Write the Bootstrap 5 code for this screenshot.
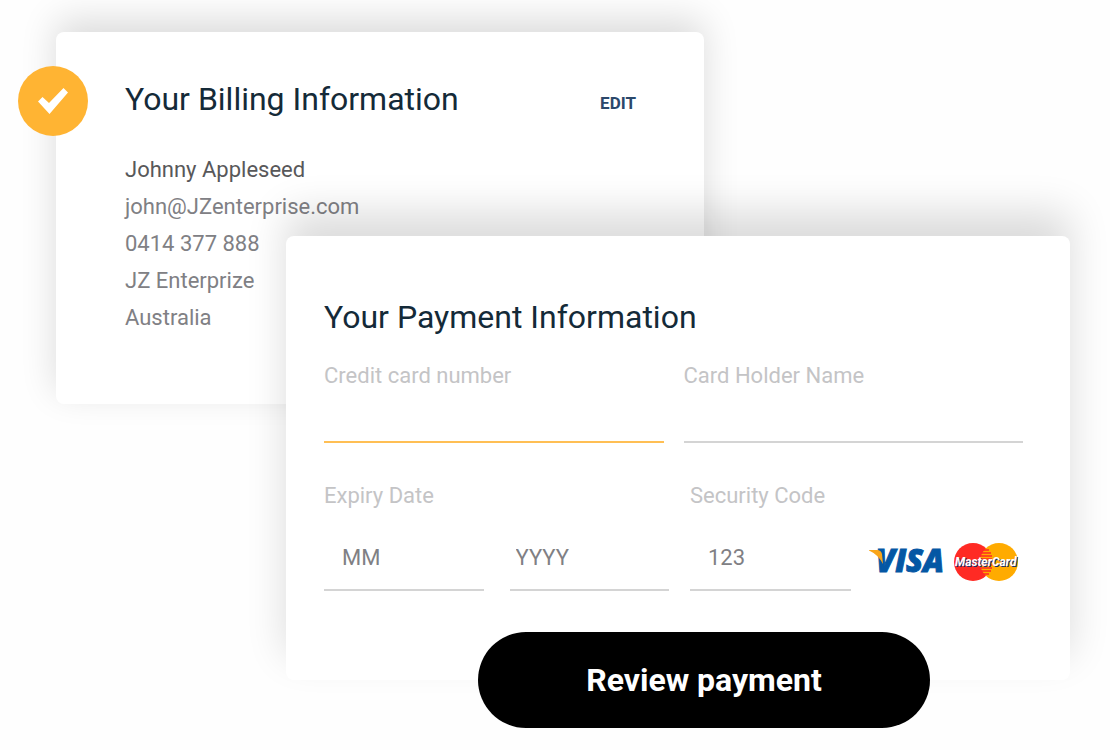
<!DOCTYPE html>
<html lang="en">
<head>
<meta charset="utf-8">
<meta name="viewport" content="width=device-width, initial-scale=1">
<title>Checkout</title>
<link href="https://cdn.jsdelivr.net/npm/bootstrap@5.3.0/dist/css/bootstrap.min.css" rel="stylesheet">
<style>
  body { font-family: Roboto, "Liberation Sans", sans-serif; font-size: 22px; background: #fefefe; color: #808084; }
  .checkout { display: grid; grid-template-columns: 230fr 418fr 366fr; grid-template-rows: 204px 168px auto; padding: 32px 40px 70px 56px; }
  .panel { border: 0; border-radius: 8px; background: #fff; }
  .billing { grid-area: 1 / 1 / 3 / 3; padding: 44px 68px 40px 69px; box-shadow: 0 -12px 36px rgba(0,0,0,.14); }
  .payment { grid-area: 2 / 2 / 4 / 4; padding: 58px 47px 0 38px; box-shadow: 0 -24px 40px rgba(0,0,0,.14); }
  .panel-title { font-size: 32px; line-height: 46px; font-weight: 400; color: #142a38; }
  .step-done { position: absolute; left: -38px; top: 34px; width: 70px; height: 70px; border-radius: 50%; background: #ffb433; }
  .edit-link { font-size: 17px; line-height: 20px; font-weight: 700; color: #2b486b; }
  .details { line-height: 37px; margin-top: 29px; }
  .details .person { color: #58585a; }
  .field-label { line-height: 28px; color: #c4c4c6; display: block; margin: 0; }
  .line-input { border: 0; border-bottom: 2px solid #d4d4d4; border-radius: 0; background: transparent; padding: 0 6px 13px; height: 53px; font-size: 22px; color: #808084; }
  .line-input:focus { box-shadow: none; background: transparent; border-color: #ffb433; }
  .line-input::placeholder { color: #808084; opacity: 1; }
  .line-input.current { border-color: #ffbf54; }
  .padded { padding-left: 18px; }
  .pair { display: grid; grid-template-columns: 1fr 1fr; column-gap: 20px; margin-top: 22px; }
  .triple { display: grid; grid-template-columns: 345fr 161fr 151px; column-gap: 21px; margin-top: 39px; }
  .expiry { display: grid; grid-template-columns: 1fr 1fr; column-gap: 26px; }
  .short { margin-top: 28px; }
  .review-btn { width: 452px; max-width: 100%; height: 96px; margin: 41px 0 -48px 154px; border: 0; border-radius: 48px; background: #000; color: #fff; font-size: 32px; font-weight: 700; }
  .review-btn:hover { background: #222; color: #fff; }
  .card-brands { flex: none; }
  .visa-word { font: italic 800 31px "Open Sans", sans-serif; fill: #0457a4; stroke: #0457a4; stroke-width: 1; }
  .mc-word { font: italic 700 12px Roboto, sans-serif; }
</style>
</head>
<body>
<main class="checkout">
  <section class="card panel billing">
    <span class="step-done d-flex align-items-center justify-content-center">
      <svg width="70" height="70" viewBox="0 0 70 70" role="img" aria-label="Completed"><path d="M20 35.500 24.500 31 31 37 45.500 22 50 26.500 31.500 48Z" fill="#fff"/></svg>
    </span>
    <div class="d-flex justify-content-between align-items-center">
      <h2 class="panel-title m-0">Your Billing Information</h2>
      <a href="#" class="edit-link text-decoration-none mt-2">EDIT</a>
    </div>
    <ul class="details list-unstyled mb-0">
      <li class="person">Johnny Appleseed</li>
      <li>john@JZenterprise.com</li>
      <li>0414 377 888</li>
      <li>JZ Enterprize</li>
      <li>Australia</li>
    </ul>
  </section>

  <section class="card panel payment">
    <form>
      <h2 class="panel-title m-0">Your Payment Information</h2>
      <div class="pair">
        <div>
          <label class="field-label" for="number">Credit card number</label>
          <input class="form-control line-input current" id="number" type="text">
        </div>
        <div>
          <label class="field-label" for="holder">Card Holder Name</label>
          <input class="form-control line-input" id="holder" type="text">
        </div>
      </div>
      <div class="triple">
        <div>
          <label class="field-label" for="month">Expiry Date</label>
          <div class="expiry short">
            <input class="form-control line-input padded" id="month" type="text" placeholder="MM">
            <input class="form-control line-input" type="text" placeholder="YYYY" aria-label="Expiry year">
          </div>
        </div>
        <div>
          <label class="field-label" for="code">Security Code</label>
          <input class="form-control line-input padded short" id="code" type="text" placeholder="123">
        </div>
        <div class="d-flex align-items-end justify-content-end pb-2">
          <svg class="card-brands" width="154" height="44" viewBox="0 0 154 44" role="img" aria-label="Visa and MasterCard">
            <text class="visa-word" x="7" y="33">VISA</text>
            <path d="M-1 11H8Q12 11 13 15L14 25Q9 15 -1 11Z" fill="#f9a51a"/>
            <circle cx="104" cy="23" r="19" fill="#ff2a24"/>
            <circle cx="130" cy="23" r="19" fill="#ffab00"/>
            <path d="M114 11H120M112 14H122M111 17H123M111 20H123M111 23H123M111 26H123M112 29H123M112 32H122M114 35H120" stroke="#ff2a24" stroke-width="1.600"/>
            <text class="mc-word" x="87" y="28" fill="#17316e">MasterCard</text>
            <text class="mc-word" x="86" y="27" fill="#fff">MasterCard</text>
          </svg>
        </div>
      </div>
      <button type="submit" class="btn review-btn">Review payment</button>
    </form>
  </section>
</main>
<script src="https://cdn.jsdelivr.net/npm/bootstrap@5.3.0/dist/js/bootstrap.bundle.min.js"></script>
</body>
</html>
